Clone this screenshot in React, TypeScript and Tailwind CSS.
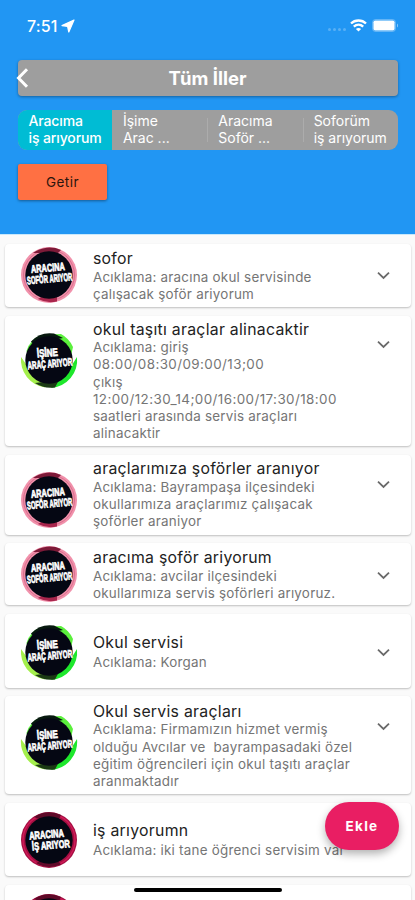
import React, { useState } from "react";

type Kind = "sofor" | "arac" | "is";

interface Listing {
  title: string;
  lines: string[];
  kind: Kind;
  card: string;
  avatar: string;
  text: string;
  arrow: string;
}

const listings: Listing[] = [
  {
    title: "sofor",
    lines: ["Acıklama: aracına okul servisinde", "çalışacak şoför ariyorum"],
    kind: "sofor",
    card: "h-[63px]",
    avatar: "mt-[3px]",
    text: "mt-[4px]",
    arrow: "mt-[22px]",
  },
  {
    title: "okul taşıtı araçlar alinacaktir",
    lines: [
      "Acıklama: giriş",
      "08:00/08:30/09:00/13;00",
      "çıkış",
      "12:00/12:30_14;00/16:00/17:30/18:00",
      "saatleri arasında servis araçları",
      "alinacaktir",
    ],
    kind: "arac",
    card: "h-[130.5px]",
    avatar: "mt-[16.5px]",
    text: "mt-[3px]",
    arrow: "mt-[19px]",
  },
  {
    title: "araçlarımıza şoförler aranıyor",
    lines: [
      "Acıklama: Bayrampaşa ilçesindeki",
      "okullarımıza araçlarımız çalışacak",
      "şoförler araniyor",
    ],
    kind: "sofor",
    card: "h-[80px]",
    avatar: "mt-[17px]",
    text: "mt-[3.5px]",
    arrow: "mt-[20px]",
  },
  {
    title: "aracıma şoför ariyorum",
    lines: [
      "Acıklama: avcilar ilçesindeki",
      "okullarımıza servis şoförleri arıyoruz.",
    ],
    kind: "sofor",
    card: "h-[62px]",
    avatar: "mt-[3px]",
    text: "mt-[4px]",
    arrow: "mt-[22.5px]",
  },
  {
    title: "Okul servisi",
    lines: ["Acıklama: Korgan"],
    kind: "arac",
    card: "h-[74px]",
    avatar: "mt-[10px]",
    text: "mt-[18px] gap-[1.5px]",
    arrow: "mt-[29px]",
  },
  {
    title: "Okul servis araçları",
    lines: [
      "Acıklama: Firmamızın hizmet vermiş",
      "olduğu Avcılar ve  bayrampasadaki özel",
      "eğitim öğrencileri için okul taşıtı araçlar",
      "aranmaktadır",
    ],
    kind: "arac",
    card: "h-[97.5px]",
    avatar: "mt-[17.5px]",
    text: "mt-[4.5px]",
    arrow: "mt-[20.5px]",
  },
  {
    title: "iş arıyorumn",
    lines: ["Acıklama: iki tane öğrenci servisim var"],
    kind: "is",
    card: "h-[73.5px]",
    avatar: "mt-[9px]",
    text: "mt-[17px] gap-[1.5px]",
    arrow: "hidden",
  },
  {
    title: "",
    lines: [],
    kind: "is",
    card: "h-[74px]",
    avatar: "mt-[9px]",
    text: "mt-[17px]",
    arrow: "hidden",
  },
];

const tabs = [
  ["Aracıma", "iş arıyorum"],
  ["İşime", "Arac ..."],
  ["Aracıma", "Soför ..."],
  ["Soforüm", "iş arıyorum"],
];

const badgeText = {
  sofor: { top: "ARACINA", bottom: "SOFÖR ARIYOR", x1: 10.5, w1: 34, x2: 5.5, w2: 45.5, y: 24.5 },
  arac: { top: "İŞİNE", bottom: "ARAÇ ARIYOR", x1: 16.5, w1: 21, x2: 6, w2: 45, y: 24.5 },
  is: { top: "ARACINA", bottom: "İŞ ARIYOR", x1: 8.5, w1: 35, x2: 10.5, w2: 38, y: 26 },
};

function Avatar({ kind }: { kind: Kind }) {
  const t = badgeText[kind];
  return (
    <svg width="56" height="56" viewBox="0 0 56 56" className="block overflow-visible">
      {kind === "sofor" && (
        <>
          <circle cx="28" cy="28" r="28" fill="#f191ab" />
          <circle cx="28" cy="28" r="25.5" fill="none" stroke="#d9708e" strokeWidth="1" />
          <path d="M12 6A28 28 0 0 1 40 3L37 6H20Z" fill="#7d1a38" />
          <path d="M17 52A28 28 0 0 0 36 54.5L36 49H22Z" fill="#a8254c" />
        </>
      )}
      {kind === "arac" && (
        <>
          <path d="M5.5 19A25 25 0 0 1 20 3L40 2A27 27 0 0 1 52 15L50 24L7 25Z" fill="#5bf03c" />
          <path d="M0 25A28 28 0 0 0 24 55.5L22 46L5 32Z" fill="#a4ef4c" />
          <path d="M56 25A28 28 0 0 1 30 56L35 48L51 33Z" fill="#1ee72c" />
          <path d="M10 9.5A26 26 0 0 1 33 1.5L42 6L12 12Z" fill="#07180f" />
          <path d="M14 51A28 28 0 0 0 34 55.4L38 48Z" fill="#1b3a14" />
        </>
      )}
      {kind === "is" && (
        <>
          <circle cx="28" cy="28" r="28" fill="#a50f42" />
          <circle cx="28" cy="28" r="26" fill="none" stroke="#ce1b58" strokeWidth="1.4" />
          <path d="M13 5A28 28 0 0 1 40 3L38 7H18Z" fill="#5e0a28" />
          <path d="M15 51A28 28 0 0 0 40 52.5L36 48H22Z" fill="#620a2a" />
        </>
      )}
      <circle cx="28" cy="28" r="23.7" fill="#050713" />
      <g
        transform="rotate(-5 28 28)"
        fill="#fff"
        fontFamily="'Liberation Sans', Arial, sans-serif"
        fontWeight="bold"
        stroke="#fff"
        strokeWidth="0.7"
      >
        <text x={t.x1} y={t.y} fontSize="11" textLength={t.w1} lengthAdjust="spacingAndGlyphs">
          {t.top}
        </text>
        <text x={t.x2} y={t.y + 11} fontSize="11" textLength={t.w2} lengthAdjust="spacingAndGlyphs">
          {t.bottom}
        </text>
      </g>
    </svg>
  );
}

function StatusBar() {
  return (
    <div className="flex h-[51px] items-center pl-[27px] pr-[16px] text-white">
      <span className="text-[16px] font-medium leading-5 tracking-[0.1px]">7:51</span>
      <svg width="14" height="14" viewBox="0 0 14 14" className="ml-[4px]">
        <path d="M13 1L1 6.6L6.6 7.4L7.8 13Z" fill="#fff" stroke="#fff" strokeWidth="1.2" strokeLinejoin="round" />
      </svg>
      <div className="ml-auto mt-[7px] flex gap-[2px]">
        {[0, 1, 2, 3].map((i) => (
          <span key={i} className="h-[3px] w-[3px] rounded-full bg-white/25" />
        ))}
      </div>
      <svg width="17" height="13" viewBox="0 0 17 13" className="ml-[4px]" fill="none" stroke="#fff" strokeWidth="2.3">
        <path d="M1 4.5C5 .5 12 .5 16 4.5" />
        <path d="M3.8 7.6C6.5 5.1 10.5 5.1 13.2 7.6" />
        <path d="M8.5 12.6L5.9 9.9C7.4 8.6 9.6 8.6 11.1 9.9Z" fill="#fff" stroke="none" />
      </svg>
      <svg width="27" height="13" viewBox="0 0 27 13" className="ml-[5px]">
        <rect x=".5" y=".5" width="23" height="12" rx="3" fill="none" stroke="#fff" strokeOpacity=".3" />
        <rect x="1.4" y="1.4" width="21.2" height="10.2" rx="1.8" fill="#fff" />
        <path d="M25 4.5C26.3 5 26.3 8 25 8.5Z" fill="#fff" fillOpacity=".5" />
      </svg>
    </div>
  );
}

function ListingCard({ item }: { item: Listing }) {
  return (
    <div
      className={`flex shrink-0 items-start rounded-[4px] bg-white pl-[15.5px] pr-[21px] shadow-[0_1px_2px_rgba(0,0,0,0.24)] ${item.card}`}
    >
      <div className={`w-[72.5px] shrink-0 ${item.avatar}`}>
        <Avatar kind={item.kind} />
      </div>
      <div className={`flex min-w-0 flex-1 flex-col pt-px ${item.text}`}>
        <h2 className="whitespace-pre text-[15.8px] leading-[19.5px] tracking-[0.28px] text-[#222]">
          {item.title}
        </h2>
        <div className="whitespace-pre text-[13.4px] leading-[17.2px] text-[#757575]">
          {item.lines.map((line) => (
            <p key={line} className={/^\d/.test(line) ? "tracking-[0.42px]" : "tracking-[0.24px]"}>
              {line}
            </p>
          ))}
        </div>
      </div>
      <svg
        width="13"
        height="18"
        viewBox="0 0 13 18"
        className={item.arrow}
        fill="none"
        stroke="#6a6a6a"
        strokeWidth="1.8"
      >
        <path d="M1 6.7L6.5 12L12 6.7" />
      </svg>
    </div>
  );
}

export default function App() {
  const [active, setActive] = useState(0);

  return (
    <div className="relative flex h-[900px] w-[415px] flex-col overflow-hidden bg-[#fafafa] font-['Inter',sans-serif]">
      <header className="h-[235px] shrink-0 border-b border-[#c9e8fb] bg-[#2196f3]">
        <StatusBar />
        <div className="ml-[18px] mt-[9px] flex h-[36px] w-[380px] items-center rounded-[4px] bg-[#9e9e9e] shadow-[0_1px_3px_rgba(0,0,0,0.35)]">
          <button title="Geri" className="-ml-[2px] w-[13px]">
            <svg width="13" height="20" viewBox="0 0 13 20" fill="none" stroke="#fff" strokeWidth="3">
              <path d="M11 1.2L2.5 10L11 18.8" />
            </svg>
          </button>
          <h1 className="flex-1 pr-[12px] text-center text-[18.5px] font-bold leading-6 text-white">
            Tüm İller
          </h1>
        </div>

        <div className="ml-[18px] mt-[14px] flex h-[40px] w-[380px] overflow-hidden rounded-[9px] bg-[#9e9e9e]">
          {tabs.map(([first, second], i) => (
            <button
              key={i}
              onClick={() => setActive(i)}
              className={`relative h-full whitespace-pre pb-[2px] text-left text-[14px] leading-[17px] text-white ${
                i === 0 ? "w-[94px] pl-[10.5px]" : "w-[95.5px] pl-[11px]"
              } ${active === i ? "bg-[#00bcd4] font-medium tracking-[-0.12px]" : ""}`}
            >
              {first}
              <br />
              {second}
              {i > 1 && <span className="absolute left-0 top-[8px] h-[24px] w-px bg-white/15" />}
            </button>
          ))}
        </div>

        <button className="ml-[18px] mt-[14px] block h-[36px] w-[89px] rounded-[2px] bg-[#ff7043] text-[13.5px] tracking-[0.5px] text-[#2b150e] shadow-[0_1px_3px_rgba(0,0,0,0.4)]">
          Getir
        </button>
      </header>

      <main className="flex min-h-0 flex-1 flex-col gap-[8.6px] overflow-hidden pl-[5px] pr-[4px] pt-[9px]">
        {listings.map((item, i) => (
          <ListingCard key={i} item={item} />
        ))}
      </main>

      <button className="absolute left-[325px] top-[802px] h-[48px] w-[74px] rounded-full bg-[#e91e63] text-[13.5px] font-bold tracking-[1.3px] text-white shadow-[0_4px_8px_rgba(0,0,0,0.3)]">
        Ekle
      </button>
      <div className="absolute left-[134px] top-[888px] h-[4px] w-[148px] rounded-full bg-black" />
    </div>
  );
}
